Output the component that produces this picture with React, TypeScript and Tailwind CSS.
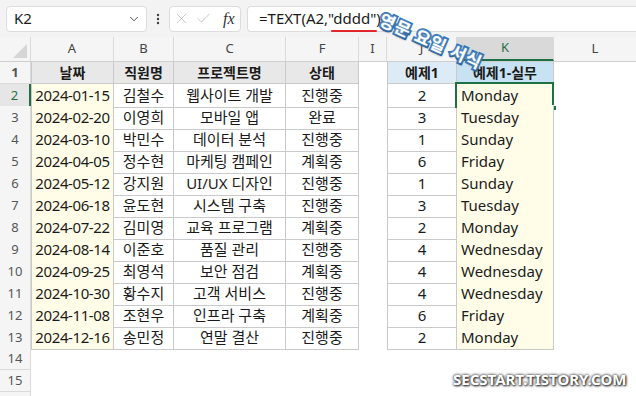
import React from "react";
import { ChevronDown, EllipsisVertical, X, Check } from "lucide-react";

const rows: [string, string, string, string, number, string][] = [
  ["2024-01-15", "김철수", "웹사이트 개발", "진행중", 2, "Monday"],
  ["2024-02-20", "이영희", "모바일 앱", "완료", 3, "Tuesday"],
  ["2024-03-10", "박민수", "데이터 분석", "진행중", 1, "Sunday"],
  ["2024-04-05", "정수현", "마케팅 캠페인", "계획중", 6, "Friday"],
  ["2024-05-12", "강지원", "UI/UX 디자인", "진행중", 1, "Sunday"],
  ["2024-06-18", "윤도현", "시스템 구축", "진행중", 3, "Tuesday"],
  ["2024-07-22", "김미영", "교육 프로그램", "계획중", 2, "Monday"],
  ["2024-08-14", "이준호", "품질 관리", "진행중", 4, "Wednesday"],
  ["2024-09-25", "최영석", "보안 점검", "계획중", 4, "Wednesday"],
  ["2024-10-30", "황수지", "고객 서비스", "진행중", 4, "Wednesday"],
  ["2024-11-08", "조현우", "인프라 구축", "계획중", 6, "Friday"],
  ["2024-12-16", "송민정", "연말 결산", "진행중", 2, "Monday"],
];

const grid = "grid grid-cols-[31px_83px_60px_112px_73px_28px_70px_97px_1fr]";
const cell = "border-b border-r border-[#cacaca] flex items-center";
const rowHead =
  "flex items-center justify-center border-b border-r border-[#dadada] bg-[#f5f5f5] text-[13px] text-[#555]";

export default function App() {
  return (
    <div className="relative w-[636px] h-[396px] overflow-hidden bg-white text-[#1b1b1b] [font-family:'Noto_Sans','Noto_Sans_CJK_KR',sans-serif]">
      {/* formula bar */}
      <div className="h-[37px] bg-[#f3f3f3] flex items-center pl-[6px] gap-0">
        <div className="w-[141px] h-[26px] bg-white border border-[#dcdcdc] rounded-[4px] flex items-center justify-between pl-[7px] pr-[5px] text-[15px]">
          <span>K2</span>
          <ChevronDown size={14} strokeWidth={1.6} className="text-[#444]" />
        </div>
        <div className="w-[22px] flex justify-center text-[#444]">
          <EllipsisVertical size={14} strokeWidth={2.2} />
        </div>
        <div className="w-[72px] h-[26px] bg-white border border-[#dcdcdc] rounded-[4px] flex items-center pl-[3px] gap-[5px]">
          <X size={17} strokeWidth={1.1} className="text-[#b5b5b5]" />
          <Check size={17} strokeWidth={1.1} className="text-[#b5b5b5]" />
          <span className="ml-[6px] text-[16px] italic [font-family:'Liberation_Serif',serif] text-[#333]">fx</span>
        </div>
        <div className="ml-[6px] flex-1 h-[26px] bg-white border border-[#dcdcdc] rounded-l-[4px] border-r-0 flex items-center pl-[11px] text-[15px]">
          =TEXT(A2,"dddd")
        </div>
      </div>

      {/* column headers */}
      <div className={`${grid} h-[25px] bg-[#f5f5f5] text-[13px] text-[#444] border-b border-[#cfcfcf]`}>
        <div className="relative border-r border-[#dadada]">
          <div className="absolute right-[3px] bottom-[3px] w-0 h-0 border-l-[14px] border-l-transparent border-b-[14px] border-b-[#d6d6d6]" />
        </div>
        {["A", "B", "C", "F", "I", "J"].map((c) => (
          <div key={c} className="flex items-center justify-center border-r border-[#dadada]">
            {c}
          </div>
        ))}
        <div className="flex items-center justify-center border-r border-[#dadada] bg-[#d9d9d9] text-[#1e7145] border-b-2 border-b-[#1e7145]">
          K
        </div>
        <div className="flex items-center justify-center">L</div>
      </div>

      {/* header row 1 */}
      <div className={`${grid} h-[22px] text-[14px] font-bold`}>
        <div className={rowHead}>1</div>
        <div className={`${cell} justify-center border-l bg-[#e8e8e8]`}>날짜</div>
        <div className={`${cell} justify-center bg-[#e8e8e8]`}>직원명</div>
        <div className={`${cell} justify-center bg-[#e8e8e8]`}>프로젝트명</div>
        <div className={`${cell} justify-center bg-[#e8e8e8]`}>상태</div>
        <div />
        <div className={`${cell} justify-center border-l bg-[#ddebf7]`}>예제1</div>
        <div className={`${cell} justify-center bg-[#c6e2f3]`}>예제1-실무</div>
        <div />
      </div>

      {rows.map((r, i) => (
        <div key={i} className={`${grid} h-[22px] text-[15px]`}>
          <div
            className={
              i === 0
                ? "flex items-center justify-center border-b border-[#dadada] bg-[#e6e6e6] text-[13px] text-[#1e7145] border-r-2 border-r-[#1e7145]"
                : rowHead
            }
          >
            {i + 2}
          </div>
          <div className={`${cell} justify-center border-l bg-[#fffde8] tracking-[-0.4px]`}>{r[0]}</div>
          <div className={`${cell} justify-center`}>{r[1]}</div>
          <div className={`${cell} justify-center`}>{r[2]}</div>
          <div className={`${cell} justify-center`}>{r[3]}</div>
          <div />
          <div className={`${cell} justify-center border-l`}>{r[4]}</div>
          <div className={`${cell} relative pl-[4px] bg-[#fffde8]`}>
            {r[5]}
            {i === 0 && (
              <>
                <div className="absolute left-[-2px] top-[-2px] right-[-1px] bottom-[-1px] border-2 border-[#1e7145]" />
                <div className="absolute right-[-4px] bottom-[-4px] w-[6px] h-[6px] bg-[#1e7145] border border-white" />
              </>
            )}
          </div>
          <div />
        </div>
      ))}

      {[14, 15].map((n) => (
        <div key={n} className={`${grid} h-[22px]`}>
          <div className={rowHead}>{n}</div>
        </div>
      ))}
      <div className={`${grid} h-[22px]`}>
        <div className="border-r border-[#dadada] bg-[#f5f5f5]" />
      </div>

      {/* red underline */}
      <div className="absolute left-[331px] top-[30px] w-[46px] h-[2px] bg-[#e3262b] rounded-full" />

      {/* annotation */}
      <div className="absolute left-[385px] top-[8px] origin-top-left rotate-[24deg] text-[17px] leading-[24px] font-bold text-white whitespace-nowrap tracking-[1px] [-webkit-text-stroke:4px_#2f6fb3] [paint-order:stroke_fill] [text-shadow:0_0_3px_#9fd0f5,1px_2px_2px_rgba(0,0,0,0.35)]">
        영문 요일 서식
      </div>

      {/* watermark */}
      <div className="absolute left-[453px] top-[368px] text-[15px] font-bold text-white tracking-[0px] [text-shadow:1px_1px_2px_#333,0_0_3px_#555,0_0_3px_#555]">
        SECSTART.TISTORY.COM
      </div>
    </div>
  );
}
